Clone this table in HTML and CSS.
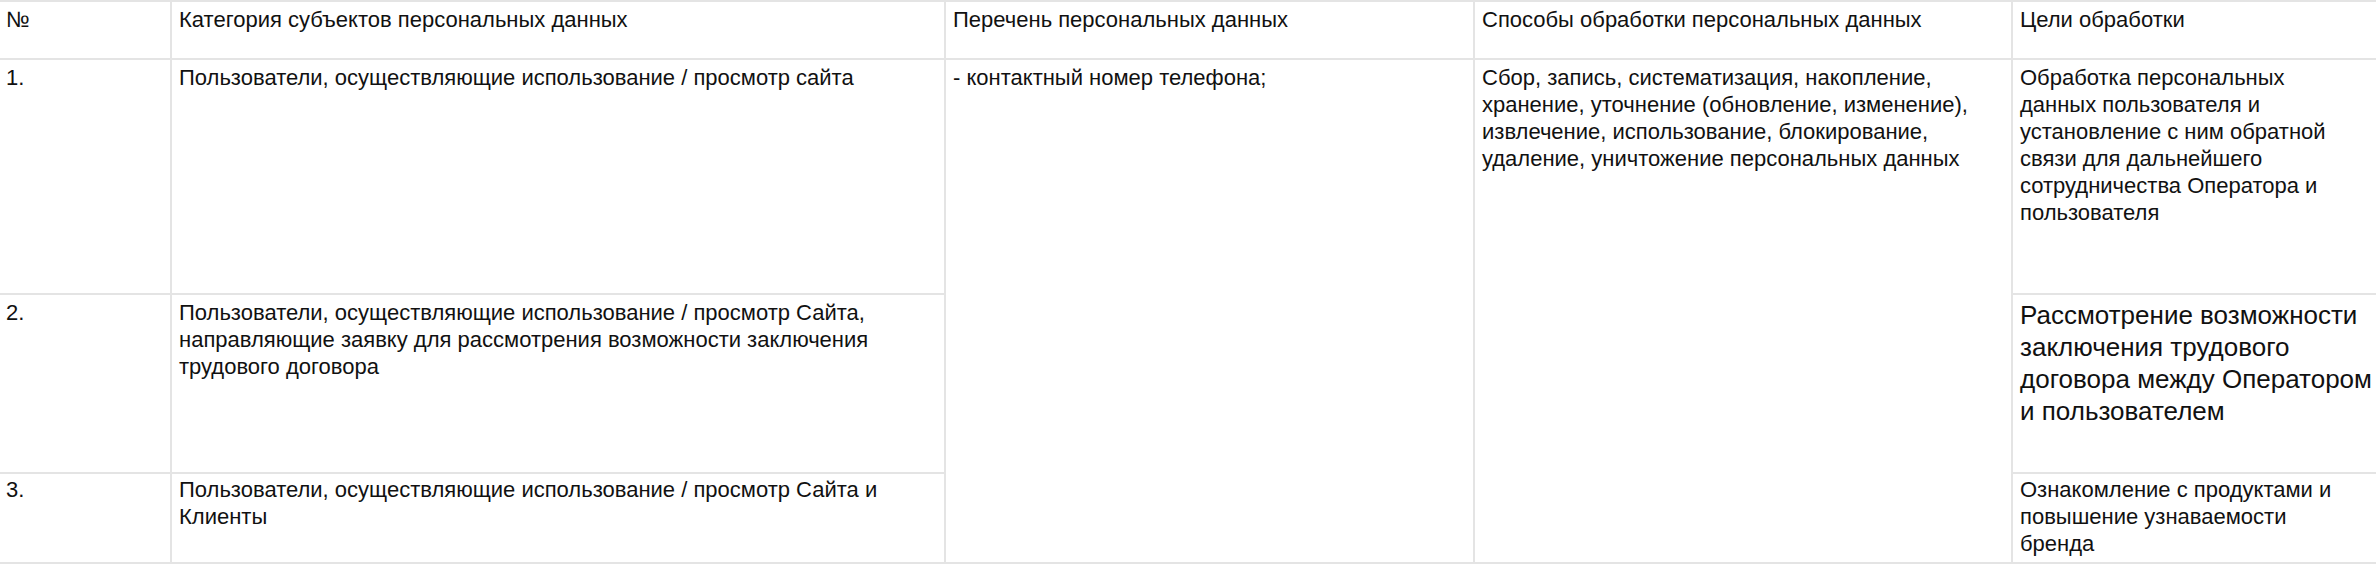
FILE: index.html
```html
<!DOCTYPE html>
<html lang="ru">
<head>
<meta charset="utf-8">
<title>Персональные данные</title>
<link rel="stylesheet" href="styles.css">
</head>
<body>
<table class="pd-table">
  <colgroup>
    <col class="c-num">
    <col class="c-cat">
    <col class="c-list">
    <col class="c-ways">
    <col class="c-goals">
  </colgroup>
  <thead>
    <tr class="row-head">
      <th>№</th>
      <th>Категория субъектов персональных данных</th>
      <th>Перечень персональных данных</th>
      <th>Способы обработки персональных данных</th>
      <th>Цели обработки</th>
    </tr>
  </thead>
  <tbody>
    <tr class="row-1">
      <td>1.</td>
      <td>Пользователи, осуществляющие использование / просмотр сайта</td>
      <td rowspan="3">- контактный номер телефона;</td>
      <td rowspan="3">Сбор, запись, систематизация, накопление, хранение, уточнение (обновление, изменение), извлечение, использование, блокирование, удаление, уничтожение персональных данных</td>
      <td class="goal">Обработка персональных<br>данных пользователя и<br>установление с ним обратной<br>связи для дальнейшего<br>сотрудничества Оператора и<br>пользователя</td>
    </tr>
    <tr class="row-2">
      <td>2.</td>
      <td>Пользователи, осуществляющие использование / просмотр Сайта, направляющие заявку для рассмотрения возможности заключения трудового договора</td>
      <td class="goal big">Рассмотрение возможности<br>заключения трудового<br>договора между Оператором<br>и пользователем</td>
    </tr>
    <tr class="row-3">
      <td>3.</td>
      <td>Пользователи, осуществляющие использование / просмотр Сайта и Клиенты</td>
      <td class="goal">Ознакомление с продуктами и<br>повышение узнаваемости<br>бренда</td>
    </tr>
  </tbody>
</table>
</body>
</html>
```

FILE: styles.css
```css
html, body {
  margin: 0;
  padding: 0;
  background: #ffffff;
  overflow: hidden;
}

.pd-table {
  border-collapse: collapse;
  table-layout: fixed;
  width: 2412px;
  font-family: "Liberation Sans", Arial, Helvetica, sans-serif;
  font-size: 22px;
  line-height: 27px;
  color: #111111;
}

.c-num { width: 171px; }
.c-cat { width: 774px; }
.c-list { width: 529px; }
.c-ways { width: 538px; }
.c-goals { width: 400px; }

.pd-table th,
.pd-table td {
  border: 2px solid #e4e4e4;
  padding: 4px 7px 0 7px;
  vertical-align: top;
  text-align: left;
  font-weight: normal;
}

.pd-table th:first-child,
.pd-table td:first-child {
  border-left: none;
  padding-left: 6px;
}

.row-head { height: 58px; }
.row-1 { height: 235px; }
.row-2 { height: 179px; }
.row-3 { height: 90px; }

.row-3 td { padding-top: 2px; }

.pd-table td.goal {
  white-space: nowrap;
}

.pd-table td.big {
  font-size: 26px;
  line-height: 32px;
}
```
